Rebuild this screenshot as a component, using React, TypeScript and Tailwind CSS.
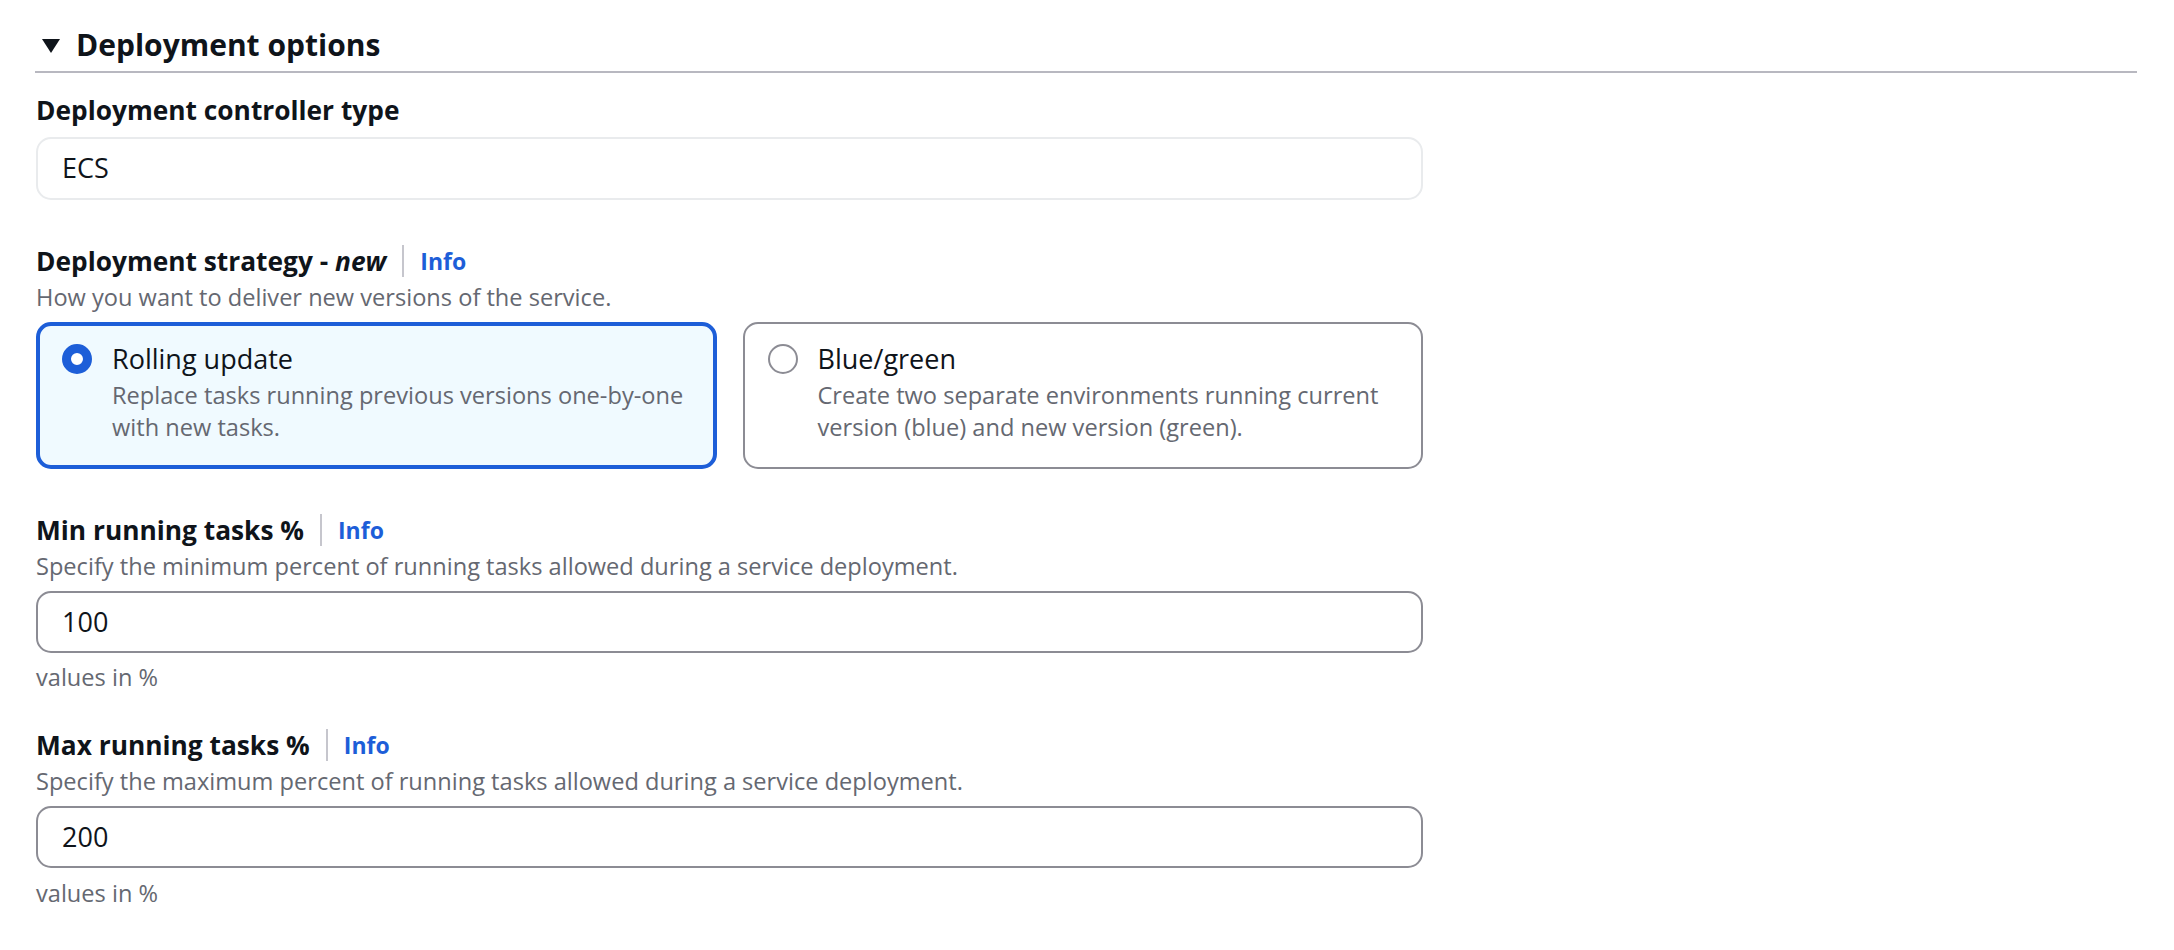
import React from "react";

const font = "font-['Open_Sans','Noto_Sans',sans-serif]";

function InfoLabel({ children }: { children: React.ReactNode }) {
  return (
    <div className="flex items-center h-[30px]">
      <span className="text-[26.3px] leading-[30px] font-bold text-[#0f141a]">{children}</span>
      <span className="mx-[16px] w-[2px] h-[32px] bg-[#c6c6cd]" />
      <a className="text-[23px] leading-[30px] font-bold text-[#1d5ed8] cursor-pointer">Info</a>
    </div>
  );
}

function Desc({ children, className = "" }: { children: React.ReactNode; className?: string }) {
  return <div className={`text-[23.6px] leading-[30px] text-[#656871] ${className}`}>{children}</div>;
}

function Tile({
  selected,
  title,
  desc,
}: {
  selected: boolean;
  title: string;
  desc: React.ReactNode;
}) {
  return (
    <div
      className={
        selected
          ? "rounded-[15px] border-[4px] border-[#1d5ed8] bg-[#f0faff] pl-[22px] pr-[22px] pt-[15px] pb-[22px]"
          : "rounded-[15px] border-[2px] border-[#8c8c94] bg-white pl-[23px] pr-[24px] pt-[17px] pb-[24px]"
      }
    >
      <div className="flex items-start gap-[20px]">
        <div className="pt-[3px] shrink-0">
          {selected ? (
            <div className="w-[30px] h-[30px] rounded-full border-[9px] border-[#1d5ed8] bg-white" />
          ) : (
            <div className="w-[30px] h-[30px] rounded-full border-[2px] border-[#8c8c94] bg-white" />
          )}
        </div>
        <div>
          <div className="text-[27px] leading-[36px] text-[#0f141a]">{title}</div>
          <div className="mt-[2px] text-[23.6px] leading-[32px] text-[#656871]">{desc}</div>
        </div>
      </div>
    </div>
  );
}

function NumberField({ value }: { value: string }) {
  return (
    <div className="h-[62px] rounded-[15px] border-[2px] border-[#8c8c94] bg-white flex items-center pl-[24px] text-[27px] text-[#0f141a]">
      {value}
    </div>
  );
}

export default function App() {
  return (
    <div className={`min-h-screen w-full bg-white ${font} text-[#0f141a]`}>
      <div className="pl-[35px] pr-[37px] pt-[21px]">
        <div className="flex items-center h-[48px]">
          <svg width="18" height="14" viewBox="0 0 18 14" className="ml-[7px] mr-[16px] mt-[1px]">
            <path d="M0 0 H18 L9 14 Z" fill="#0f141a" />
          </svg>
          <span className="text-[30px] leading-[48px] font-bold text-[#0f141a]">Deployment options</span>
        </div>
        <div className="mt-[2px] h-[2px] bg-[#b8b8c0]" />
      </div>

      <div className="ml-[36px] w-[1387px]">
        <div className="mt-[22px] text-[26.3px] leading-[30px] font-bold">Deployment controller type</div>
        <div className="mt-[12px] h-[63px] rounded-[15px] border-[2px] border-[#e9ebed] bg-white flex items-center pl-[24px] text-[27px] text-[#0f141a]">
          ECS
        </div>

        <div className="mt-[46px]">
          <div className="flex items-center h-[30px]">
            <span className="text-[26.3px] leading-[30px] font-bold text-[#0f141a]">
              Deployment strategy - <span className="italic font-bold">new</span>
            </span>
            <span className="mx-[16px] w-[2px] h-[32px] bg-[#c6c6cd]" />
            <a className="text-[23px] leading-[30px] font-bold text-[#1d5ed8] cursor-pointer">Info</a>
          </div>
        </div>
        <Desc className="mt-[6px]">How you want to deliver new versions of the service.</Desc>

        <div className="mt-[10px] grid grid-cols-2 gap-[26px] w-[1387px]">
          <Tile
            selected
            title="Rolling update"
            desc={
              <>
                Replace tasks running previous versions one-by-one
                <br />
                with new tasks.
              </>
            }
          />
          <Tile
            selected={false}
            title="Blue/green"
            desc={
              <>
                Create two separate environments running current
                <br />
                version (blue) and new version (green).
              </>
            }
          />
        </div>

        <div className="mt-[46px]">
          <InfoLabel>Min running tasks %</InfoLabel>
        </div>
        <Desc className="mt-[6px]">Specify the minimum percent of running tasks allowed during a service deployment.</Desc>
        <div className="mt-[10px]">
          <NumberField value="100" />
        </div>
        <div className="mt-[10px] text-[23.6px] leading-[28px] text-[#656871]">values in %</div>

        <div className="mt-[39px]">
          <InfoLabel>Max running tasks %</InfoLabel>
        </div>
        <Desc className="mt-[6px]">Specify the maximum percent of running tasks allowed during a service deployment.</Desc>
        <div className="mt-[10px]">
          <NumberField value="200" />
        </div>
        <div className="mt-[11px] text-[23.6px] leading-[28px] text-[#656871]">values in %</div>
      </div>
    </div>
  );
}
